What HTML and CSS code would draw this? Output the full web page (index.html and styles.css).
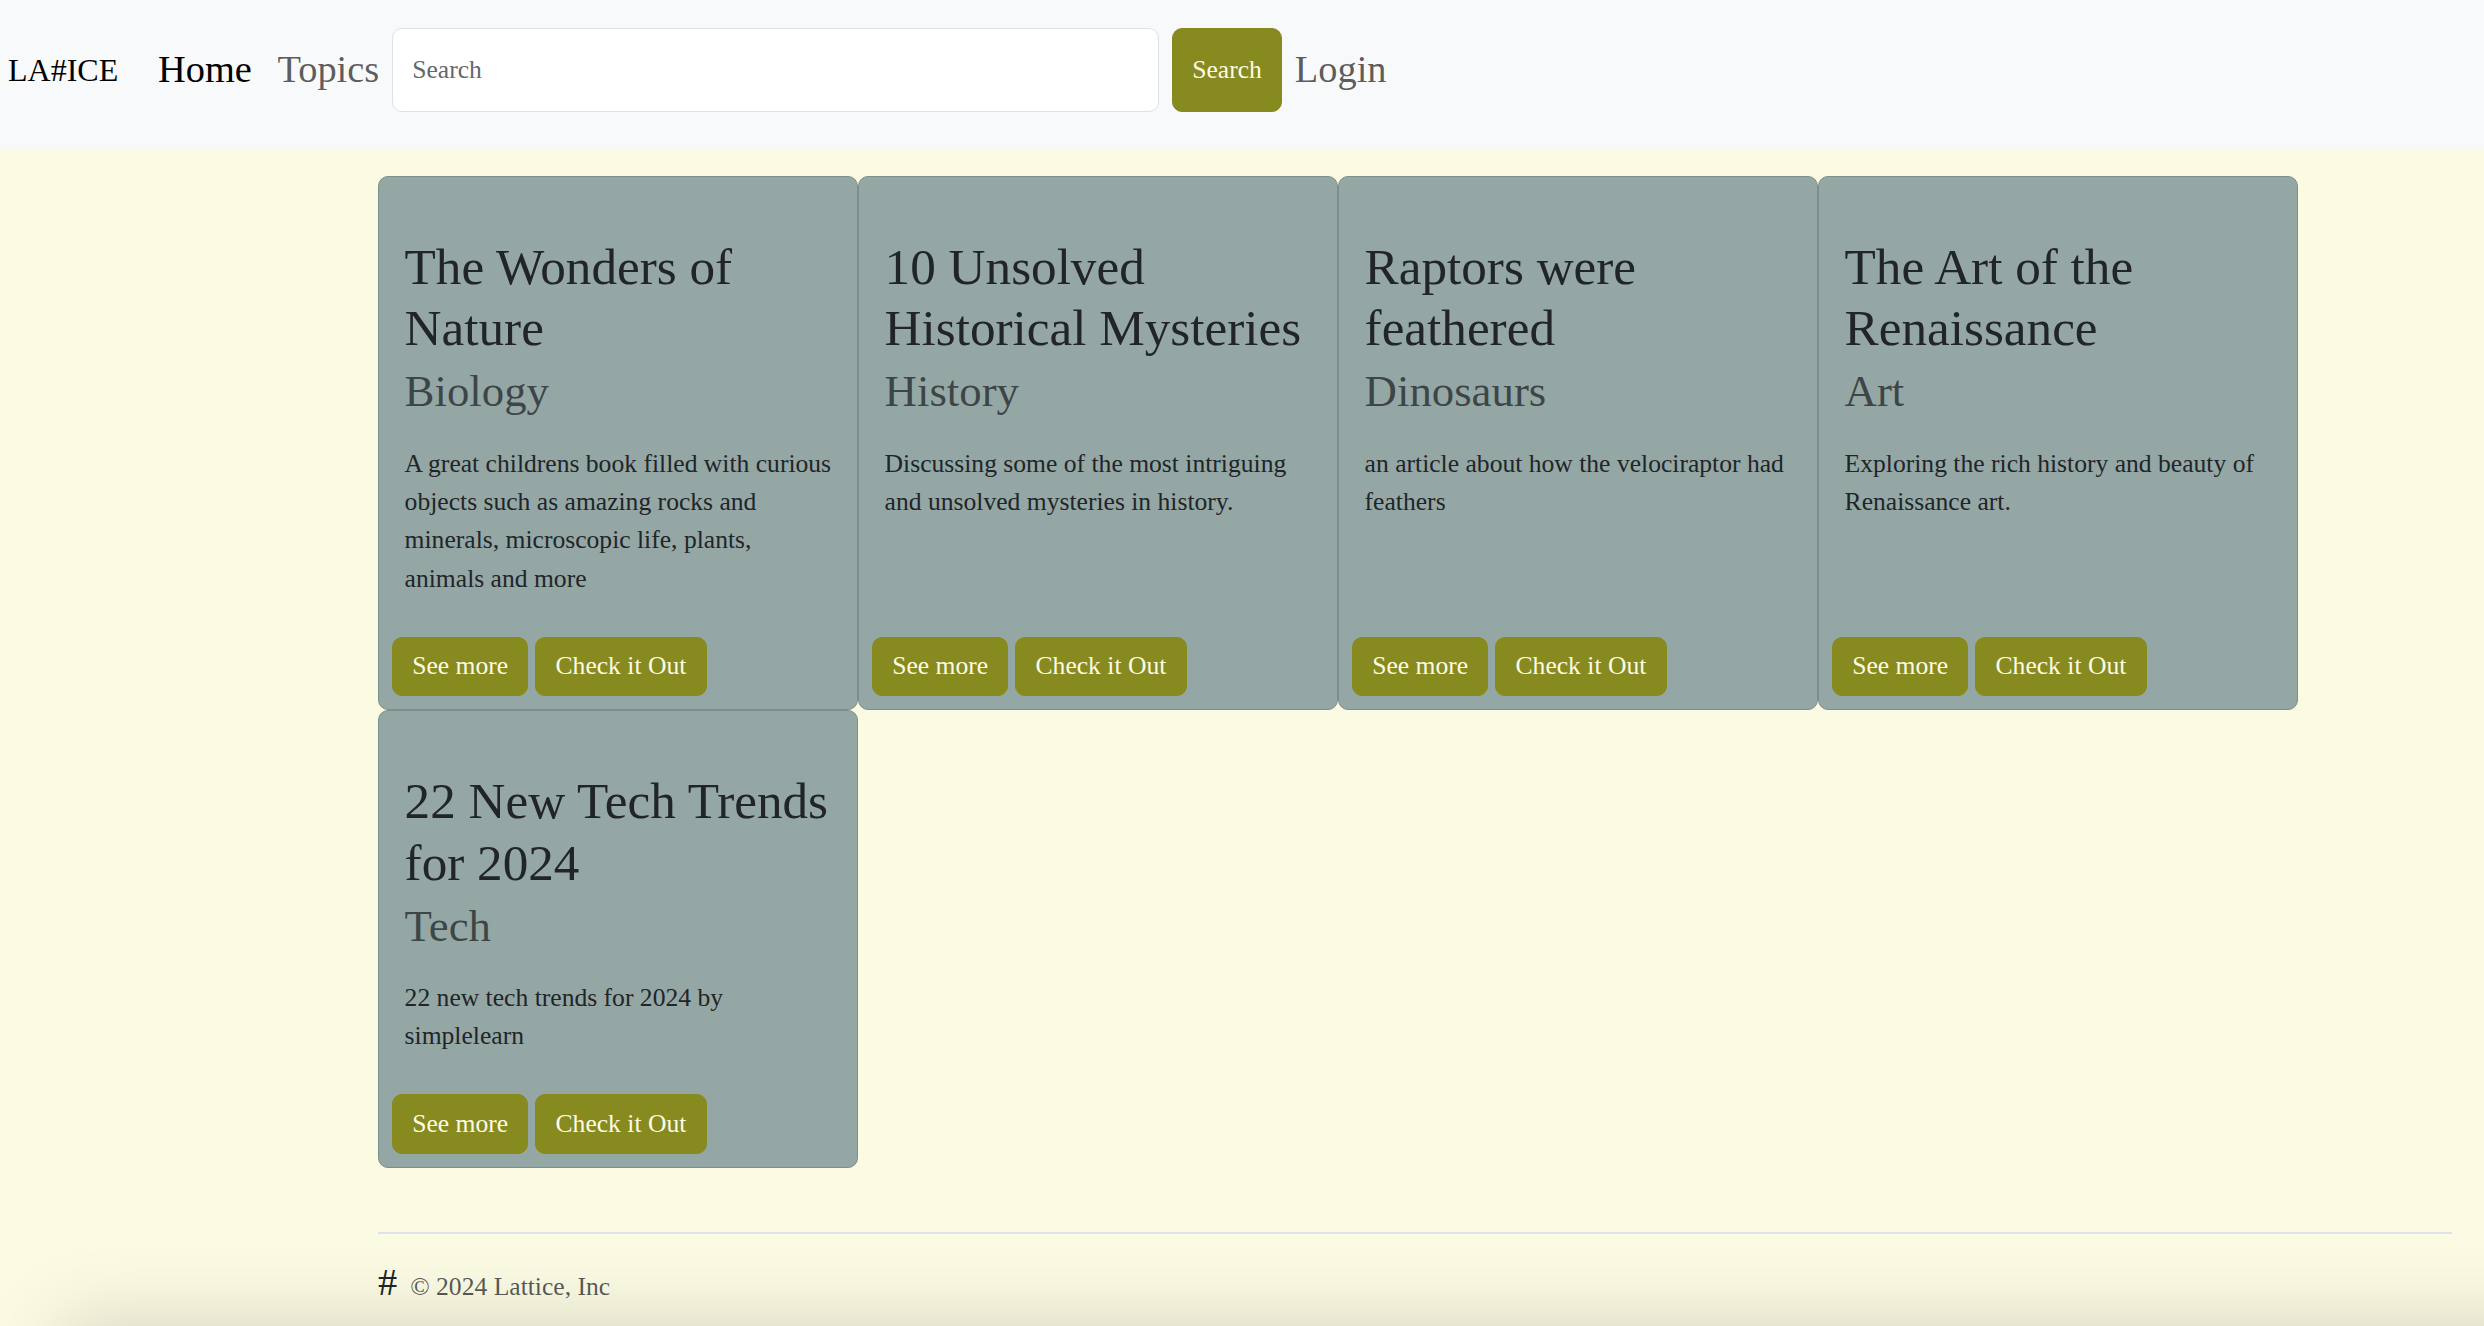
FILE: index.html
```html
<!DOCTYPE html>
<html lang="en">
<head>
<meta charset="utf-8">
<title>Lattice</title>
<link rel="stylesheet" href="styles.css">
</head>
<body>
<nav class="navbar">
  <a class="brand" href="#">LA#ICE</a>
  <a class="nav-link active" href="#">Home</a>
  <a class="nav-link" href="#">Topics</a>
  <form class="search-form">
    <input class="search-input" type="search" placeholder="Search">
    <button class="btn search-btn" type="button">Search</button>
  </form>
  <a class="nav-link" href="#">Login</a>
</nav>

<main class="main">
  <div class="cards">
    <div class="card">
      <div class="card-body">
        <h5 class="card-title">The Wonders of Nature</h5>
        <h6 class="card-subtitle">Biology</h6>
        <p class="card-text">A great childrens book filled with curious objects such as amazing rocks and minerals, microscopic life, plants, animals and more</p>
      </div>
      <div class="card-actions">
        <a class="btn" href="#">See more</a>
        <a class="btn" href="#">Check it Out</a>
      </div>
    </div>
    <div class="card">
      <div class="card-body">
        <h5 class="card-title">10 Unsolved Historical Mysteries</h5>
        <h6 class="card-subtitle">History</h6>
        <p class="card-text">Discussing some of the most intriguing and unsolved mysteries in history.</p>
      </div>
      <div class="card-actions">
        <a class="btn" href="#">See more</a>
        <a class="btn" href="#">Check it Out</a>
      </div>
    </div>
    <div class="card">
      <div class="card-body">
        <h5 class="card-title">Raptors were feathered</h5>
        <h6 class="card-subtitle">Dinosaurs</h6>
        <p class="card-text">an article about how the velociraptor had feathers</p>
      </div>
      <div class="card-actions">
        <a class="btn" href="#">See more</a>
        <a class="btn" href="#">Check it Out</a>
      </div>
    </div>
    <div class="card">
      <div class="card-body">
        <h5 class="card-title">The Art of the Renaissance</h5>
        <h6 class="card-subtitle">Art</h6>
        <p class="card-text">Exploring the rich history and beauty of Renaissance art.</p>
      </div>
      <div class="card-actions">
        <a class="btn" href="#">See more</a>
        <a class="btn" href="#">Check it Out</a>
      </div>
    </div>
    <div class="card">
      <div class="card-body">
        <h5 class="card-title">22 New Tech Trends for 2024</h5>
        <h6 class="card-subtitle">Tech</h6>
        <p class="card-text">22 new tech trends for 2024 by simplelearn</p>
      </div>
      <div class="card-actions">
        <a class="btn" href="#">See more</a>
        <a class="btn" href="#">Check it Out</a>
      </div>
    </div>
  </div>

  <footer class="footer">
    <span class="footer-logo">#</span>
    <span class="footer-text">© 2024 Lattice, Inc</span>
  </footer>
</main>
<div class="page-shadow"></div>
</body>
</html>
```

FILE: styles.css
```css
html {
  overflow: hidden;
}

body {
  margin: 0;
  background: #fbfbe3;
  font-family: "Liberation Serif", "Times New Roman", serif;
  font-size: 25.6px;
  line-height: 1.5;
  color: #212529;
}

a {
  text-decoration: none;
}

/* Navbar */
.navbar {
  display: flex;
  align-items: center;
  height: 150px;
  box-sizing: border-box;
  padding: 28px 0 38px 8px;
  background: #f8f9fa;
}

.brand {
  font-size: 32px;
  line-height: 1.5;
  color: #000;
  margin-right: 27px;
}

.nav-link {
  font-size: 38.4px;
  line-height: 1.5;
  padding: 0 12.8px;
  color: rgba(0, 0, 0, 0.65);
}

.nav-link.active {
  color: #000;
}

.search-form {
  display: flex;
  align-items: stretch;
  height: 84px;
  gap: 13px;
}

.search-input {
  width: 767px;
  box-sizing: border-box;
  height: 84px;
  margin: 0;
  padding: 0 19.2px;
  border: 1.6px solid #dee2e6;
  border-radius: 10px;
  background: #fff;
  font-family: inherit;
  font-size: 25.6px;
  color: #212529;
  outline: none;
  -webkit-appearance: none;
  appearance: none;
}

.search-input::placeholder {
  color: #64676b;
}

.btn {
  display: inline-flex;
  align-items: center;
  justify-content: center;
  box-sizing: border-box;
  padding: 9.6px 19.2px;
  border: 1px solid #878a1e;
  border-radius: 10px;
  background: #878a1e;
  color: #fdfbe6;
  font-family: inherit;
  font-size: 25.6px;
  line-height: 1.5;
  cursor: pointer;
}

.search-btn {
  width: 110px;
  height: 84px;
  padding: 0;
}

/* Main */
.main {
  padding: 26px 32px 0 378px;
}

.cards {
  display: flex;
  flex-wrap: wrap;
}

.card {
  width: 480px;
  box-sizing: border-box;
  display: flex;
  flex-direction: column;
  background: #94a7a4;
  border: 1px solid #7d8f8c;
  border-radius: 10px;
}

.card-body {
  flex: 1;
  padding: 59px 25.6px 0;
}

.card-title {
  margin: 0 0 12.8px;
  font-size: 51.2px;
  line-height: 1.2;
  font-weight: 400;
  color: #212529;
}

.card-subtitle {
  margin: -6.4px 0 25.6px;
  font-size: 44.8px;
  line-height: 1.2;
  font-weight: 400;
  color: rgba(33, 37, 41, 0.75);
}

.card-text {
  margin: 0 0 25.6px;
}

.card-actions {
  display: flex;
  gap: 7px;
  padding: 12.8px 13px 13.2px;
}

/* Footer */
.footer {
  display: flex;
  align-items: baseline;
  margin-top: 64px;
  padding-top: 20px;
  border-top: 2px solid #dee2e6;
}

.footer-logo {
  font-size: 38.4px;
  line-height: 1.5;
  color: #212529;
  margin-right: 13px;
}

.footer-text {
  color: rgba(33, 37, 41, 0.75);
}

.page-shadow {
  position: fixed;
  left: 60px;
  right: -200px;
  top: 100%;
  height: 200px;
  box-shadow: 0 0 80px 0 rgba(0, 0, 0, 0.17);
  pointer-events: none;
}
```
